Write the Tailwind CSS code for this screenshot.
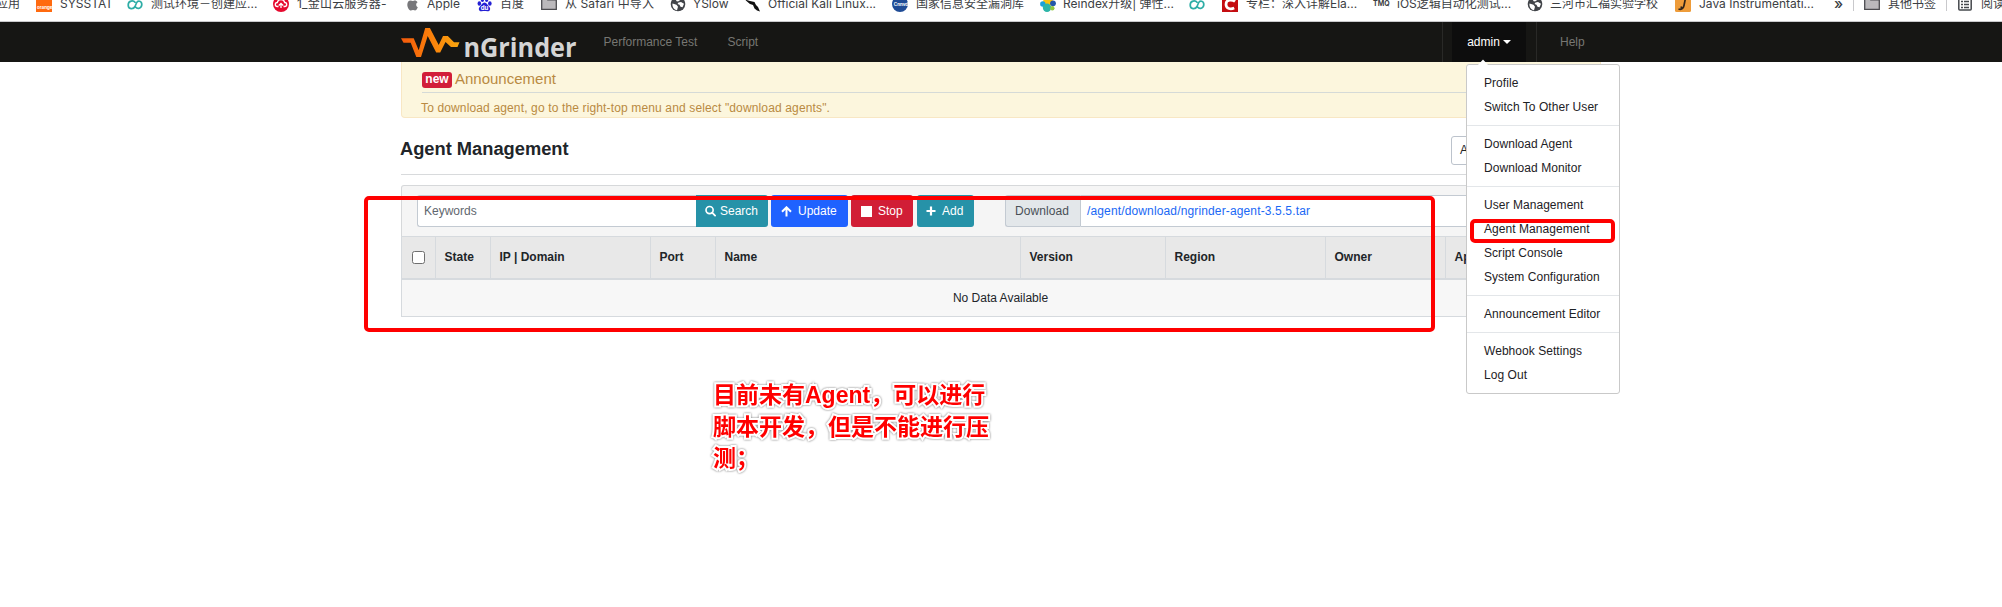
<!DOCTYPE html>
<html lang="zh">
<head>
<meta charset="utf-8">
<title>nGrinder - Agent Management</title>
<script src="https://cdn.jsdelivr.net/npm/@tailwindcss/browser@4"></script>
</head>
<body class="relative h-[607px] w-[2002px] overflow-hidden bg-white font-['Liberation_Sans','Noto_Sans_CJK_SC',sans-serif] text-[12px] leading-[18px] text-[#212529]">

<svg class="hidden">
  <symbol id="loop" viewBox="0 0 16 12"><path d="M8 3.2C6.5 1.2 1.2 1.2 1.2 6c0 4.6 5.200 4.600 6.800 1.500L9.500 4c1.300-3 5.300-2.200 5.300 1.600 0 4-4.500 4.900-6.300 2.400" fill="none" stroke="#2eada6" stroke-width="1.700" stroke-linecap="round"/></symbol>
  <symbol id="globe" viewBox="0 0 16 16"><circle cx="8" cy="8" r="7.300" fill="#414449"/><path d="M2.500 7.500l4 1.200 1.500 2-1 3.500c-3-.4-5-3.500-4.500-6.700zM8.500 6.500l2.500-.5 3 1.800-1.500 3.500-2-.5-1-2-2-.8zM9 1.500l2 2-3 2-2-.5 1.500-3.300z" fill="#fff"/></symbol>
  <symbol id="folder" viewBox="0 0 16 14"><path d="M.7 12.300V.8h5l1 2h8.600v9.500z" fill="#bbb9bc" stroke="#4c4c50" stroke-width="1.300"/></symbol>
</svg>

<!-- Bookmark bar -->
<div class="flex h-[22px] w-full overflow-hidden whitespace-nowrap border-b border-[#c9c9cc] bg-white font-[Inter,'Noto_Sans_CJK_SC',sans-serif] text-[12px] text-[#3c4043]">
  <div class="-mt-[5px] flex h-[18px] items-center">
    <div class="w-[36px] shrink-0 -ml-[4px] mr-[4px]">应用</div>
    <div class="flex w-[91px] shrink-0 items-center"><svg class="mr-2 h-4 w-4" viewBox="0 0 16 16"><rect width="16" height="16" fill="#ff6a0f"/><text x="1" y="13" font-size="4.500" font-weight="700" fill="#fff">orange</text></svg>SYSSTAT</div>
    <div class="flex w-[146px] shrink-0 items-center"><svg class="mr-2 mt-[2px] h-3 w-4"><use href="#loop"/></svg>测试环境－创建应...</div>
    <div class="flex w-[132px] shrink-0 items-center tracking-[0.2px]"><svg class="mr-2 h-4 w-4" viewBox="0 0 16 16"><circle cx="8" cy="8" r="8" fill="#e60a2f"/><path d="M5.500 10.500H4.300a2 2 0 010-4 3.800 3.800 0 017.400 0 2 2 0 010 4h-1.200M8 12V8M5.800 9.500L8 7.500l2.200 2" fill="none" stroke="#fff" stroke-width="1.300"/></svg>1_金山云服务器-</div>
    <div class="flex w-[72px] shrink-0 items-center"><svg class="mr-[6px] h-[14px] w-4" viewBox="0 0 16 14"><path d="M9.800 3.500c-1 0-1.400.5-2 .5S6.500 3.500 5.500 3.500C3.800 3.500 2.300 5 2.300 7.700S4.300 13.500 5.900 13.500c.7 0 1.100-.4 2-.4s1.200.4 2 .4c1.300 0 2.400-1.800 2.900-3.200-2-.9-2.200-3.800-.2-5-.7-1.200-1.700-1.800-2.800-1.800zM8 3c0-1.500 1-2.500 2.300-2.800C10.400 1.700 9.300 3 8 3z" fill="#77777a"/></svg>Apple</div>
    <div class="flex w-[64px] shrink-0 items-center"><svg class="mr-[8px] h-4 w-[15px]" viewBox="0 0 16 16"><g fill="#2521d4"><ellipse cx="2.500" cy="7.500" rx="1.900" ry="2.400"/><ellipse cx="5.800" cy="3.300" rx="1.800" ry="2.500"/><ellipse cx="10.300" cy="3.300" rx="1.800" ry="2.500"/><ellipse cx="13.700" cy="7.500" rx="1.900" ry="2.400"/><path d="M8 6.500c2.500 0 3 2.500 5 4.300 2 2 1 5-2 4.900-2-.2-4-.2-6 0-3 .2-4-3-2-4.900C5 9 5.500 6.500 8 6.500z"/></g><text x="4" y="14.200" font-size="6.500" font-weight="700" fill="#fff">du</text></svg>百度</div>
    <div class="flex w-[129px] shrink-0 items-center tracking-[0.1px]"><svg class="mr-2 h-[14px] w-4"><use href="#folder"/></svg>从 Safari 中导入</div>
    <div class="flex w-[75px] shrink-0 items-center"><svg class="mr-[7px] h-4 w-4"><use href="#globe"/></svg>YSlow</div>
    <div class="flex w-[147px] shrink-0 items-center"><svg class="mr-[7px] h-4 w-4" viewBox="0 0 16 16"><path d="M0 3.500L5 5l4.500 1L11 9l2 2 2 4.500-3-1-2.500-2L8 9 5 8 2 5.500z" fill="#111"/></svg>Official Kali Linux...</div>
    <div class="flex w-[148px] shrink-0 items-center"><svg class="mr-[8px] h-4 w-4" viewBox="0 0 16 16"><circle cx="8" cy="8" r="8" fill="#1f4c96"/><text x="1.800" y="10" font-size="4.500" font-weight="700" fill="#fff">Cnnvd</text></svg>国家信息安全漏洞库</div>
    <div class="flex w-[149px] shrink-0 items-center"><svg class="mr-[7px] h-4 w-4" viewBox="0 0 16 16"><circle cx="8" cy="5.500" r="4.800" fill="#fbc20f"/><circle cx="2.800" cy="8" r="2.700" fill="#1ba0dc"/><circle cx="13" cy="7.300" r="2.900" fill="#2458a9"/><circle cx="7" cy="11.800" r="4.200" fill="#2db5a8"/><circle cx="12.300" cy="12.300" r="2.200" fill="#93c83e"/></svg>Reindex升级| 弹性...</div>
    <div class="flex w-[33px] shrink-0 items-center"><svg class="mt-[2px] h-3 w-4"><use href="#loop"/></svg></div>
    <div class="flex w-[151px] shrink-0 items-center"><svg class="mr-2 h-4 w-4" viewBox="0 0 16 16"><rect width="16" height="16" fill="#c40d11"/><path d="M13 5.500C10.500 3.500 4 3 4 8.200c0 5 5 5.300 8.200 3.800" fill="none" stroke="#fff" stroke-width="2.700"/></svg>专栏：深入详解Ela...</div>
    <div class="flex w-[154px] shrink-0 items-center"><span class="mr-[8px] w-4 text-[7px] font-bold">TMQ</span>iOS逻辑自动化测试...</div>
    <div class="flex w-[148px] shrink-0 items-center"><svg class="mr-[7px] h-4 w-4"><use href="#globe"/></svg>三河市汇福实验学校</div>
    <div class="flex w-[159px] shrink-0 items-center"><svg class="mr-2 h-4 w-4" viewBox="0 0 16 16"><rect width="16" height="16" rx="1.500" fill="#ee9c3a"/><path d="M10.500 2L9 9.500C8.500 12.500 6 14 3.500 13M5.500 11.500l1.500-.5" fill="none" stroke="#30241a" stroke-width="1.700"/></svg>Java Instrumentati...</div>
    <div class="w-[19px] shrink-0 text-[15px] font-medium">»</div>
    <div class="mr-[10px] h-[14px] w-px shrink-0 bg-[#c9c9cc]"></div>
    <div class="flex w-[82px] shrink-0 items-center"><svg class="mr-2 h-[14px] w-4"><use href="#folder"/></svg>其他书签</div>
    <div class="mr-[11px] h-[14px] w-px shrink-0 bg-[#c9c9cc]"></div>
    <div class="flex shrink-0 items-center"><svg class="mr-[9px] h-4 w-[14px]" viewBox="0 0 14 16"><rect x=".8" y="2" width="12.400" height="12" rx="1" fill="none" stroke="#46494d" stroke-width="1.500"/><path d="M3 5.500h2M6 5.500h5M3 8.500h2M6 8.500h5M3 11.500h2M6 11.500h5" stroke="#46494d" stroke-width="1.300"/></svg>阅读清单</div>
  </div>
</div>

<!-- Navbar -->
<nav class="flex h-[40px] bg-[#161614] pl-[401px] text-[#777773]">
  <svg class="h-[40px] w-[180px] shrink-0" viewBox="0 0 180 40">
    <defs><linearGradient id="wave" gradientUnits="userSpaceOnUse" x1="0" x2="58" y1="0" y2="0"><stop offset="0" stop-color="#f4590b"/><stop offset=".5" stop-color="#fb7f0b"/><stop offset="1" stop-color="#f8a50f"/></linearGradient></defs>
    <path d="M0 16.200h12.700l5 12L24.200 6h4.700l8.800 17L42 14h4.800l6.200 6.300h5.500l-2 4.600h-6.500L44.500 20l-5.300 10.500h-4L26.700 14 20 35h-4.700L9.700 20.800H2.500z" fill="url(#wave)"/>
    <text x="62.500" y="35" font-family="Open Sans" font-weight="700" font-size="27.500" fill="#d4d4d4" textLength="113" lengthAdjust="spacingAndGlyphs">nGrinder</text>
  </svg>
  <a class="ml-[22.500px] w-[124px] pt-[11px]">Performance Test</a>
  <a class="pt-[11px]">Script</a>
  <div class="ml-auto flex w-[560px]">
    <div class="w-[10px] border-l border-[#292927]"></div>
    <a class="flex w-[74px] justify-center bg-[#0d0d0d] pt-[11px] text-white">admin<span class="ml-[3px] mt-[7px] h-0 border-x-[4px] border-t-[4px] border-x-transparent border-t-white"></span></a>
    <div class="ml-[10px] border-l border-[#292927] pl-[23px] pt-[11px]">Help</div>
  </div>
</nav>

<main class="ml-[401px] w-[1200px]">
  <section class="h-[56px] rounded-b-[4px] border border-t-0 border-[#f8e7c4] bg-[#fcf6dd] px-5 text-[#b98a42]">
    <h4 class="flex h-[31px] items-start border-b border-[#d5dad7] pt-[8px] text-[15px]"><span class="mr-[3px] mt-[2px] h-4 w-[30px] rounded-[3px] bg-[#d21e39] text-center text-[12px] font-bold leading-[15px] text-white">new</span>Announcement</h4>
    <p class="-ml-px pt-[6px] tracking-[0.140px]">To download agent, go to the right-top menu and select "download agents".</p>
  </section>

  <header class="flex h-[57px] justify-between border-b border-[#d8dadc] pt-[18px]">
    <h3 class="-ml-px pt-[2px] text-[18.300px] font-bold leading-[22px]">Agent Management</h3>
    <div class="h-[29px] w-[150px] rounded-[3px] border border-[#bcc3cc] pl-2 pt-[4px]">All</div>
  </header>

  <div class="mt-[10px] flex h-[51px] rounded-t-[3px] border border-b-0 border-[#d6d8da] bg-[#f5f5f5] pl-[15px] pt-[9px]">
    <div class="h-8 w-[279px] rounded-l-[3px] border border-r-0 border-[#c3cad2] bg-white pl-[6px] pt-[6px] text-[#5f676f]">Keywords</div>
    <button class="flex h-8 w-[72px] items-center rounded-r-[3px] bg-[#2692a8] pl-[9px] text-white"><svg class="mr-[4px] h-3 w-[11px]" viewBox="0 0 12 12"><circle cx="5" cy="5" r="3.900" fill="none" stroke="#fff" stroke-width="1.800"/><path d="M7.800 7.800l3.200 3.200" stroke="#fff" stroke-width="2" stroke-linecap="round"/></svg>Search</button>
    <button class="ml-[3px] flex h-8 w-[77px] items-center rounded-[3px] bg-[#1f62ff] pl-[10px] text-white"><svg class="mr-[6px] h-[11px] w-[11px]" viewBox="0 0 11 11"><path d="M1 5.800l4.500-4.500L10 5.800M5.500 2v8.500" fill="none" stroke="#fff" stroke-width="2"/></svg>Update</button>
    <button class="ml-[3px] flex h-8 w-[62px] items-center rounded-[3px] bg-[#d11e36] pl-[10px] text-white"><span class="mr-[6px] h-[11px] w-[11px] bg-white"></span>Stop</button>
    <button class="ml-[4px] flex h-8 w-[57px] items-center rounded-[3px] bg-[#2692a8] pl-[9px] text-white"><svg class="mr-[6px] h-[10px] w-[10px]" viewBox="0 0 10 10"><path d="M5 .5v9M.5 5h9" stroke="#fff" stroke-width="2.200"/></svg>Add</button>
    <div class="ml-[31px] flex h-8">
      <span class="w-[75px] rounded-l-[3px] border border-r-0 border-[#c3cad2] bg-[#e3e7ea] pl-[9px] pt-[6px] text-[#495057] tracking-[0.080px]">Download</span>
      <span class="w-[505px] rounded-r-[3px] border border-[#c3cad2] bg-white pl-[6px] pt-[6px] text-[#1a68f5] tracking-[0.140px]">/agent/download/ngrinder-agent-3.5.5.tar</span>
    </div>
  </div>

  <table class="h-[81px] w-[1200px] table-fixed border-separate border-spacing-0 border-l border-[#d6dade]">
    <thead>
      <tr class="h-[44px] text-left [&>th]:border-r [&>th]:border-t [&>th]:border-b-2 [&>th]:border-[#d6dade] [&>th]:bg-[#e8e8e8] [&>th]:pl-[8.500px] [&>th]:pb-px">
        <th class="w-[34px]"><span class="ml-[1.500px] mt-[1px] block h-[13px] w-[13px] rounded-[2.500px] border border-[#6f6f6f] bg-white"></span></th>
        <th class="w-[55px]">State</th>
        <th class="w-[160px]">IP | Domain</th>
        <th class="w-[65px]">Port</th>
        <th class="w-[305px]">Name</th>
        <th class="w-[145px]">Version</th>
        <th class="w-[160px]">Region</th>
        <th class="w-[120px]">Owner</th>
        <th>Approved</th>
      </tr>
    </thead>
    <tbody>
      <tr class="h-[37px]"><td colspan="9" class="border-b border-r border-[#d6dade] bg-[#f7f7f7] pr-px text-center">No Data Available</td></tr>
    </tbody>
  </table>
</main>

<!-- User menu -->
<div class="absolute left-[1466px] top-[64px] w-[154px] rounded-[3px] border border-[#c9c9c9] bg-white py-[6px] leading-6 tracking-[0.050px] text-[#1d2125] [&>a]:block [&>a]:pl-[17px] [&>hr]:my-[6px] [&>hr]:border-[#e3e6e9]">
  <svg class="absolute -top-[6px] left-[10px] h-[7px] w-3" viewBox="0 0 12 7"><path d="M0 7l6-6.500L12 7z" fill="#fff"/></svg>
  <a>Profile</a><a>Switch To Other User</a><hr>
  <a>Download Agent</a><a>Download Monitor</a><hr>
  <a>User Management</a><a>Agent Management</a><a>Script Console</a><a>System Configuration</a><hr>
  <a>Announcement Editor</a><hr>
  <a>Webhook Settings</a><a>Log Out</a>
</div>

<!-- Annotations -->
<div class="absolute left-[364px] top-[196px] h-[136px] w-[1071px] rounded-[5px] border-4 border-[#ff0000]"></div>
<div class="absolute left-[1470px] top-[219px] h-[24px] w-[145px] rounded-[5px] border-4 border-[#ff0000]"></div>
<p class="absolute left-[713px] top-[380px] whitespace-nowrap text-[23px] font-bold leading-[31.700px] text-[#ff0000] [paint-order:stroke_fill] [-webkit-text-stroke:4px_white] [filter:drop-shadow(0_0_1px_#777)]">目前未有Agent，可以进行<br>脚本开发，但是不能进行压<br>测；</p>
</body>
</html>
